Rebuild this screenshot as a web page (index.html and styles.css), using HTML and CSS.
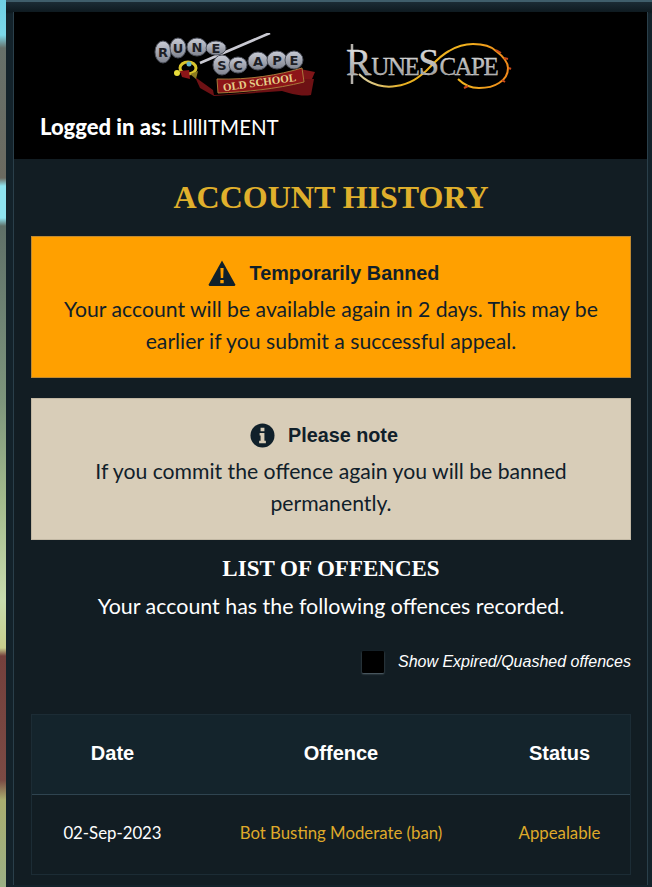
FILE: index.html
```html
<!DOCTYPE html>
<html lang="en">
<head>
<meta charset="utf-8">
<title>Account History</title>
<link rel="stylesheet" href="styles.css">
</head>
<body>
<div class="panel">
  <div class="inner">
    <header class="top">
      <div class="logos">
        <svg class="logo-osrs" viewBox="0 0 164 64" width="164" height="64">
          <defs>
            <linearGradient id="stone" x1="0" y1="0" x2="0" y2="1">
              <stop offset="0" stop-color="#c9ccd6"/><stop offset="1" stop-color="#7f838e"/>
            </linearGradient>
            <linearGradient id="steel" x1="0" y1="0" x2="0" y2="1">
              <stop offset="0" stop-color="#f4f4f4"/><stop offset="1" stop-color="#8a8a8a"/>
            </linearGradient>
          </defs>
          <path d="M46 30L116 0" stroke="#c9c9d2" stroke-width="2.600"/>
          <path d="M41 44L59 57L60 62C95 61 125 55 146 46L160 46L157 62C146 64 136 60 128 58L60 63L46 55Z" fill="#6d1114"/>
          <path d="M146 36L161 39L158 46L146 46Z" fill="#7f1518"/>
          <path d="M63 46C95 47 125 42 148 35L150 49C122 56 92 59 64 60Z" fill="#8d1518" stroke="#a9793a"/>
          <text class="old-school" x="106" y="53" text-anchor="middle" transform="rotate(-8 106 53)">OLD SCHOOL</text>
          <g fill="url(#stone)" stroke="#4d515c">
            <ellipse cx="9" cy="19" rx="8" ry="11"/>
            <ellipse cx="24" cy="15" rx="8" ry="10"/>
            <ellipse cx="43" cy="14" rx="10" ry="9"/>
            <ellipse cx="62" cy="15" rx="10" ry="7"/>
            <ellipse cx="68" cy="32" rx="9" ry="10"/>
            <ellipse cx="84" cy="32" rx="9" ry="8"/>
            <ellipse cx="104" cy="28" rx="10" ry="9"/>
            <ellipse cx="123" cy="27" rx="10" ry="9"/>
            <ellipse cx="140" cy="27" rx="9" ry="9"/>
          </g>
          <g class="rune-text" text-anchor="middle">
            <text x="9" y="24">R</text><text x="24" y="20">U</text><text x="43" y="19">N</text><text x="62" y="20">E</text>
            <text x="68" y="37">S</text><text x="84" y="37">C</text><text x="104" y="33">A</text><text x="123" y="32">P</text><text x="140" y="32">E</text>
          </g>
          <ellipse cx="34" cy="35" rx="8" ry="6" fill="none" stroke="#d8c42c" stroke-width="3"/>
          <circle cx="35" cy="31" r="2.500" fill="#62b4c8"/>
          <circle cx="23" cy="40" r="3" fill="#e8dc3a"/>
          <path d="M26 38L35 37L36 46L28 44Z" fill="#8d1518"/>
          <path d="M36 41L44 38L42 46Z" fill="#8a7a20"/>
        </svg>
        <svg class="logo-rs" viewBox="0 -8 166 56" width="166" height="56">
          <defs>
            <linearGradient id="fire" x1="0" y1="0" x2="1" y2="0">
              <stop offset="0" stop-color="#d8d0a8"/><stop offset=".3" stop-color="#e8b020"/><stop offset=".7" stop-color="#f2b31e"/><stop offset="1" stop-color="#f08a1a"/>
            </linearGradient>
          </defs>
          <path d="M6 0V40" stroke="#b4b0aa" stroke-width="2.500"/>
          <path d="M13 30C25 42 40 44 50 42C65 40 73 33 80 27C88 19 95 11 103 7C113 1 122 0 127 0C138 0 146 3 150 7C158 13 162 19 162 24C162 31 158 36 153 39C147 43 140 44 133 44C124 44 117 40 112 35" fill="none" stroke="url(#fire)" stroke-width="2"/>
          <path d="M150 6L155 9M158 14L162 15M163 24L165 25M156 36L159 38M122 42L118 44" stroke="#c9491a" stroke-width="2"/>
          <text class="rs-word" x="0" y="31" fill="url(#steel)"><tspan class="rs-big">R</tspan><tspan class="rs-small">UNE</tspan><tspan class="rs-big">S</tspan><tspan class="rs-small">CAPE</tspan></text>
        </svg>
      </div>
      <p class="login"><strong>Logged in as:</strong> LIlllITMENT</p>
    </header>
    <main class="content">
      <h1 class="title">Account History</h1>
      <section class="notice notice-warn">
        <h2 class="notice-head">
          <svg class="notice-icon" viewBox="0 0 28 26" width="28" height="26"><path d="M14 .5L27.300 24.500Q27.500 26 26 26H2Q.5 26 .7 24.500Z" fill="#10202a"/><path d="M12.400 8h3.200l-.4 10h-2.400zM12.300 20h3.400v3.200h-3.400z" fill="#ffa000"/></svg>
          Temporarily Banned
        </h2>
        <p>Your account will be available again in 2 days. This may be earlier if you submit a successful appeal.</p>
      </section>
      <section class="notice notice-info">
        <h2 class="notice-head">
          <svg class="notice-icon" viewBox="0 0 26 26" width="25" height="25"><circle cx="13" cy="13" r="12.500" fill="#10202a"/><path d="M11 5h4v3.500h-4zM10 10.500h5v8h1.500V21h-7v-2.500H11v-5.500h-1z" fill="#d8cdb8"/></svg>
          Please note
        </h2>
        <p>If you commit the offence again you will be banned permanently.</p>
      </section>
      <h3 class="list-title">List of Offences</h3>
      <p class="list-sub">Your account has the following offences recorded.</p>
      <label class="toggle"><span class="check"></span><em>Show Expired/Quashed offences</em></label>
      <table class="offences">
        <thead>
          <tr><th class="c-date">Date</th><th class="c-off">Offence</th><th class="c-stat">Status</th></tr>
        </thead>
        <tbody>
          <tr><td class="date">02-Sep-2023</td><td class="gold">Bot Busting Moderate (ban)</td><td class="gold">Appealable</td></tr>
        </tbody>
      </table>
    </main>
  </div>
</div>
</body>
</html>
```
FILE: styles.css
```css
* { box-sizing: border-box; }
html, body { margin: 0; height: 100%; }
body {
  height: 887px;
  overflow: hidden;
  padding-left: 6px;
  font-family: "Lato", "Open Sans", sans-serif;
  color: #fff;
  background: linear-gradient(180deg, #6fd0e4 0, #7cd8ea 35px, #66706a 48px, #6b6a60 178px, #8fe4f0 186px, #8fe4f0 218px, #5f7068 226px, #6f8474 320px, #7d957c 400px, #a3bb8d 500px, #c8dcae 600px, #c8cf8d 648px, #74403c 656px, #7a4a44 780px, #a9ae70 800px, #9bb085 887px);
}
.panel {
  height: 887px;
  padding: 12px 4px 0 7px;
  border-top: 2px solid #3f5e6b;
  background: linear-gradient(180deg, #1b2c35 0, #0e1a20 10px, #13222a 12px);
}
.inner {
  height: 100%;
  margin-top: -2px;
  background: #121d23;
  border-left: 1px solid #2a3f4a;
  border-right: 1px solid #2a3f4a;
}
.top {
  height: 147px;
  background: #000;
  padding: 0 26px;
  overflow: hidden;
}
.logos {
  display: flex;
  justify-content: center;
  align-items: flex-start;
  gap: 28px;
  padding: 21px 0 0 4px;
  height: 94px;
}
.logo-osrs { flex: none; }
.logo-rs { flex: none; margin-top: 3px; }
.rune-text text { font: 700 13px "DejaVu Sans", sans-serif; fill: #1d2026; }
.old-school { font: 700 11px "Liberation Serif", serif; fill: #e6cf8a; }
.rs-word { stroke: #d8d8d8; stroke-width: .3px; }
.rs-big { font: 400 38px "Liberation Serif", serif; }
.rs-small { font: 400 25px "Liberation Serif", serif; letter-spacing: -1.500px; }
.login { margin: 9px 0 0; font-size: 20.500px; line-height: 24px; }
.login strong { font-weight: 900; font-size: 22px; }
.content { padding: 0 16px 0 17px; }
.title {
  margin: 18px 0 19px;
  text-align: center;
  text-transform: uppercase;
  font: 700 32px/40px "Liberation Serif", serif;
  color: #e0b02c;
}
.notice {
  border: 1px solid #c08a30;
  text-align: center;
  color: #10202a;
  font-size: 21.200px;
  line-height: 32px;
  padding: 20px 24px;
  margin-bottom: 20px;
  height: 142px;
}
.notice p { margin: 4px 0 0; }
.notice-warn { background: #ffa000; }
.notice-info { background: #d8cdb8; border-color: #c2b8a4; padding-left: 50px; padding-right: 50px; }
.notice-head {
  display: flex;
  justify-content: center;
  align-items: center;
  gap: 13px;
  margin: 0;
  padding-right: 14px;
  font: 700 19.800px/32px "Liberation Sans", sans-serif;
  color: #10202a;
}
.notice-warn .notice-head { gap: 14px; padding-right: 15px; }
.list-title {
  margin: -7px 0 0;
  text-align: center;
  text-transform: uppercase;
  font: 700 23px/32px "Liberation Serif", serif;
  color: #fff;
}
.list-sub { margin: 5px 0 0; text-align: center; font-size: 21.400px; line-height: 32px; }
.toggle {
  display: flex;
  justify-content: flex-end;
  align-items: center;
  gap: 14px;
  margin-top: 29px;
  height: 22px;
  font: italic 400 16px/22px "Liberation Sans", sans-serif;
}
.check {
  width: 22px;
  height: 22px;
  background: #000;
  box-shadow: 0 1px 2px #5b6a72;
  border-radius: 1px;
}
.offences {
  width: 600px;
  margin-top: 41px;
  border-collapse: separate;
  border-spacing: 0;
  table-layout: fixed;
  border: 1px solid #1c2c35;
}
.offences th {
  height: 80px;
  padding: 0 1px 2px;
  background: #14242c;
  border-bottom: 1px solid #2f4450;
  font: 700 20px "Liberation Sans", sans-serif;
  color: #fff;
}
.offences td {
  height: 79px;
  padding: 0 1px 4px;
  text-align: center;
  font-size: 16.800px;
}
.c-date { width: 161px; }
.c-off { width: 296px; }
.c-stat { width: 141px; }
.date { color: #fff; }
.gold { color: #dfa92a; }
```
